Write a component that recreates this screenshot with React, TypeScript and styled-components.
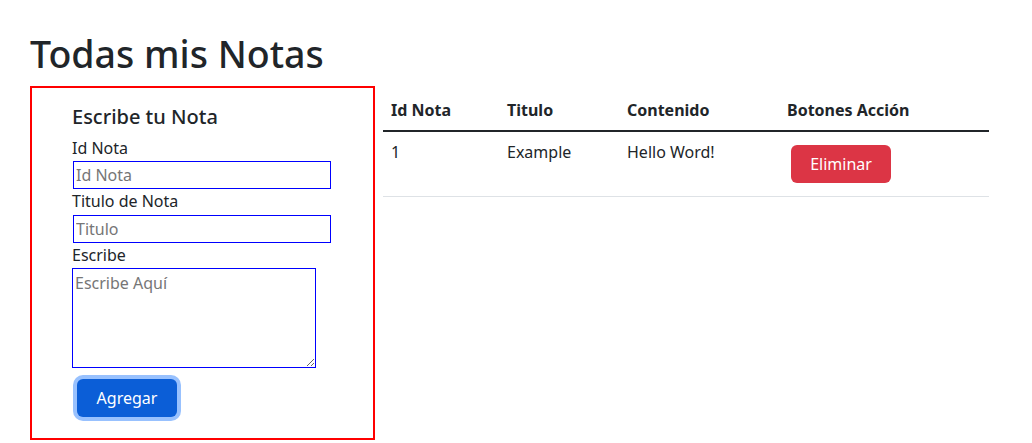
import React, { useState } from "react";
import styled, { createGlobalStyle } from "styled-components";

const GlobalStyle = createGlobalStyle`
  body {
    margin: 0;
    font-family: "Noto Sans", "Open Sans", sans-serif;
    font-size: 16px;
    line-height: 1.5;
    color: #212529;
    background: #fff;
  }
  * { box-sizing: border-box; }
`;

type Nota = { id: number; titulo: string; contenido: string };

const App = () => {
  const [notas, setNotas] = useState<Nota[]>([
    { id: 1, titulo: "Example", contenido: "Hello Word!" },
  ]);

  const eliminar = (id: number) => {
    setNotas(notas.filter((n) => n.id !== id));
  };

  return (
    <Page>
      <GlobalStyle />
      <Title>Todas mis Notas</Title>
      <Row>
        <FormBox>
          <FormTitle>Escribe tu Nota</FormTitle>
          <Label>Id Nota</Label>
          <Input placeholder="Id Nota" />
          <Label>Titulo de Nota</Label>
          <Input placeholder="Titulo" />
          <Label>Escribe</Label>
          <TextArea placeholder="Escribe Aquí" />
          <AddButton type="button">Agregar</AddButton>
        </FormBox>
        <Table>
          <colgroup>
            <col style={{ width: 116 }} />
            <col style={{ width: 120 }} />
            <col style={{ width: 160 }} />
            <col />
          </colgroup>
          <thead>
            <tr>
              <Th>Id Nota</Th>
              <Th>Titulo</Th>
              <Th>Contenido</Th>
              <Th>Botones Acción</Th>
            </tr>
          </thead>
          <tbody>
            {notas.map((n) => (
              <tr key={n.id}>
                <Td>{n.id}</Td>
                <Td>{n.titulo}</Td>
                <Td>{n.contenido}</Td>
                <Td>
                  <DeleteButton type="button" onClick={() => eliminar(n.id)}>
                    Eliminar
                  </DeleteButton>
                </Td>
              </tr>
            ))}
          </tbody>
        </Table>
      </Row>
    </Page>
  );
};

export default App;

const Page = styled.div`
  padding: 31px 0 0 30px;
`;

const Title = styled.h1`
  margin: 0 0 10px;
  font-size: 37.5px;
  font-weight: 500;
  line-height: 1.2;
`;

const Row = styled.div`
  display: flex;
  align-items: flex-start;
  gap: 8px;
`;

const FormBox = styled.div`
  width: 345px;
  flex-shrink: 0;
  border: 2px solid red;
  padding: 16.5px 20px 21px 40px;
  display: flex;
  flex-direction: column;
  align-items: flex-start;
`;

const FormTitle = styled.h5`
  margin: 0 0 7px;
  font-size: 20px;
  font-weight: 500;
  line-height: 1.2;
`;

const Label = styled.label`
  display: block;
  line-height: 25.5px;
`;

const Input = styled.input`
  width: 258px;
  height: 28px;
  margin-left: 1px;
  padding: 1px 2px;
  border: 1px solid blue;
  font: inherit;
  color: #212529;
  outline: none;

  &::placeholder {
    color: #767676;
  }
`;

const TextArea = styled.textarea`
  width: 244px;
  height: 100px;
  padding: 2px;
  border: 1px solid blue;
  font: inherit;
  color: #212529;
  outline: none;

  &::placeholder {
    color: #767676;
  }
`;

const AddButton = styled.button`
  margin: 11px 0 0 5px;
  width: 100px;
  height: 38px;
  border: none;
  border-radius: 6px;
  background: #0b5ed7;
  color: #fff;
  font: inherit;
  box-shadow: 0 0 0 4px #98c1fe;
  cursor: pointer;
`;

const Table = styled.table`
  width: 606px;
  border-collapse: collapse;
  margin-top: 4px;
`;

const Th = styled.th`
  text-align: left;
  font-weight: 700;
  padding: 8px;
  border-bottom: 2px solid #212529;
`;

const Td = styled.td`
  vertical-align: top;
  padding: 8px;
  border-bottom: 1px solid #dee2e6;
`;

const DeleteButton = styled.button`
  margin: 5px 0 5px 4px;
  width: 100px;
  height: 38px;
  border: none;
  border-radius: 6px;
  background: #dc3545;
  color: #fff;
  font: inherit;
  cursor: pointer;
`;
